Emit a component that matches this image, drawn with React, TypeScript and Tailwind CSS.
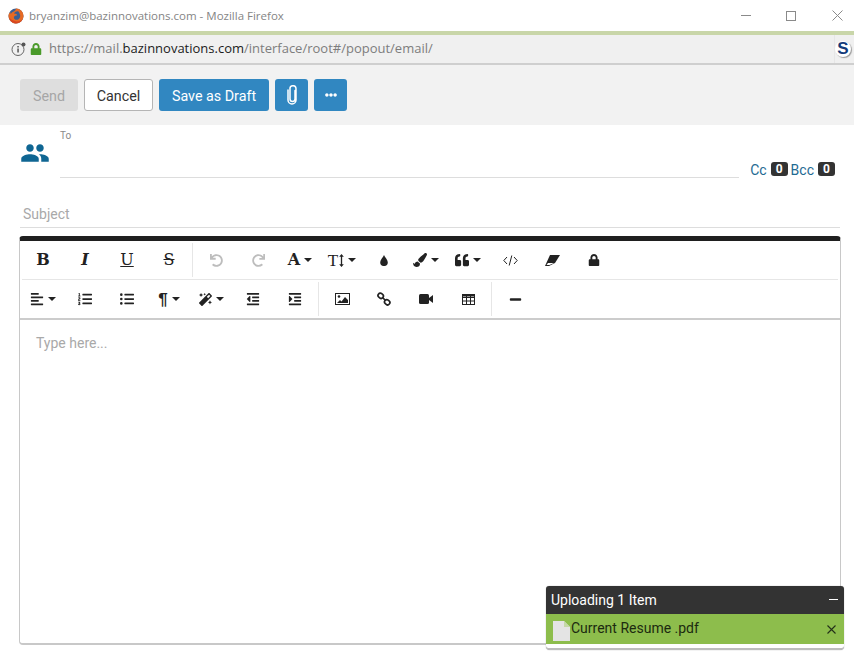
import React from "react";
import { FaPaintBrush, FaQuoteLeft, FaLock, FaAlignLeft, FaListOl, FaListUl, FaMagic, FaOutdent, FaIndent, FaMinus, FaUndo, FaRedo, FaEllipsisH } from "react-icons/fa";
import { MdPeople } from "react-icons/md";

const Caret = () => <span className="ml-[4px] inline-block h-0 w-0 border-x-[4px] border-t-[4px] border-x-transparent border-t-[#222]" />;

const Tool = ({ children, caret, light }: { children: React.ReactNode; caret?: boolean; light?: boolean }) => (
  <div className={`flex h-full w-[42px] shrink-0 items-center justify-center text-[13px] ${light ? "text-[#bdbdbd]" : "text-[#222]"}`}>
    {children}
    {caret && <Caret />}
  </div>
);

const Serif = ({ children, className = "" }: { children: React.ReactNode; className?: string }) => (
  <span className={`font-['DejaVu_Serif','Liberation_Serif',serif] text-[16px] leading-none ${className}`}>{children}</span>
);

const Sep = () => <div className="mx-[2px] h-[34px] w-px shrink-0 bg-[#e6e6e6]" />;

export default function App() {
  return (
    <div className="relative h-[660px] w-[854px] overflow-hidden bg-white font-['Roboto',sans-serif]">
      {/* window title */}
      <div className="flex h-[31px] items-center bg-white pl-[8px]">
        <svg width="16" height="16" viewBox="0 0 16 16" className="mr-[5px]">
          <circle cx="8" cy="8" r="7.5" fill="#3a5f94" />
          <path d="M8 .5a7.500 7.500 0 1 1-7.400 6.300C1 5.300 1.800 4.400 2.600 4c-.2.800-.1 1.500.3 2 .5-1.500 2-2.200 3.200-2.800C7.300 2.600 7.800 1.500 8 .5zM10.500 3.500c-1.800-.6-4.300.6-4.300 2.300 1.300-.2 2.500.3 3.100 1.400-1.500.2-3.600.5-3.400 2.500.2 1.600 2 2.500 3.600 2 2-.6 3.200-2.900 2.500-5C11.700 5.600 11.200 4.400 10.500 3.500z" fill="#e66a24" />
          <path d="M1 9c.6 3.500 3.500 6.300 7 6.300 3 0 5.600-1.800 6.800-4.300-1.500 2-4.500 3-7.300 2.300C4.500 12.500 2.500 11.200 1 9z" fill="#d9451f" />
        </svg>
        <span className="font-['Open_Sans',sans-serif] text-[11.500px] text-[#858585]">bryanzim@bazinnovations.com - Mozilla Firefox</span>
        <div className="ml-auto flex items-center">
          <div className="mr-[35px] h-px w-[10px] bg-[#8a8a8a]" />
          <div className="mr-[36px] h-[10px] w-[10px] border border-[#8a8a8a]" />
          <svg width="11" height="11" viewBox="0 0 11 11" className="mr-[11px]"><path d="M.5.5l10 10M10.500.5l-10 10" stroke="#8a8a8a" fill="none" /></svg>
        </div>
      </div>
      <div className="h-[4px] bg-[#c9d6a9]" />

      {/* url bar */}
      <div className="flex h-[30px] items-center border-b-2 border-[#cfcfcf] bg-[#f0f0f0] pl-[11px] font-['Open_Sans',sans-serif] text-[13px]">
        <svg width="16" height="16" viewBox="0 0 16 16" className="mr-[3px]">
          <circle cx="7" cy="8.500" r="6" fill="none" stroke="#666" strokeWidth="1" />
          <rect x="6.300" y="7.500" width="1.500" height="4" fill="#555" />
          <rect x="6.300" y="5" width="1.500" height="1.500" fill="#555" />
          <circle cx="12.500" cy="3.500" r="2" fill="#555" />
        </svg>
        <FaLock className="mr-[7px] text-[12px] text-[#4a9a2a]" />
        <span className="text-[#7d7d7d]">https://mail.</span>
        <span className="text-[#1c1c1c]">bazinnovations.com</span>
        <span className="text-[#7d7d7d]">/interface/root#/popout/email/</span>
        <div className="ml-auto flex h-full w-[20px] items-center justify-start border-l border-[#e6e6e6]">
          <span className="flex h-[16px] w-[16px] items-center justify-center rounded-full bg-white font-['Liberation_Sans',sans-serif] text-[17px] font-bold text-[#123a7a] shadow-[1px_1px_1px_#999]">S</span>
        </div>
      </div>

      {/* action bar */}
      <div className="flex h-[60px] items-center gap-[6px] bg-[#f2f2f2] pl-[20px] text-[14.300px] leading-[30px]">
        <div className="flex h-[32px] w-[58px] items-center justify-center rounded-[3px] bg-[#dedede] pt-[2px] text-[#a6a6a6]">Send</div>
        <div className="flex h-[32px] w-[69px] items-center justify-center rounded-[3px] border border-[#b5b5b5] bg-white pt-[1px] text-[#333]">Cancel</div>
        <div className="flex h-[32px] w-[110px] items-center justify-center rounded-[3px] bg-[#3187c1] pt-[2px] text-white">Save as Draft</div>
        <div className="flex h-[32px] w-[33px] items-center justify-center rounded-[3px] bg-[#3187c1] text-white">
          <svg width="12" height="20" viewBox="0 0 12 20" fill="none" stroke="currentColor" strokeWidth="1.500" strokeLinecap="round">
            <path d="M8.500 5.500V14a2.500 2.500 0 0 1-5 0V4a3 3 0 0 1 6-.500V15a4 4 0 0 1-8 0V5" transform="translate(.5 0)" />
          </svg>
        </div>
        <div className="flex h-[32px] w-[33px] items-center justify-center rounded-[3px] bg-[#3187c1] text-white"><FaEllipsisH className="text-[12px]" /></div>
      </div>

      {/* to */}
      <div className="flex h-[53px] pl-[20px] pr-[19px]">
        <MdPeople className="mt-[13px] w-[30px] shrink-0 text-[30px] text-[#0f6693]" />
        <div className="ml-[10px] h-full w-[680px] border-b border-[#dddddd] pt-[5px] text-[10px] leading-[12px] text-[#8a8a8a]">To</div>
        <div className="ml-[11px] mt-[37px] flex items-start text-[14px] leading-[15px] text-[#1f6a92]">
          <span className="pt-[1px]">Cc</span>
          <span className="ml-[4px] mr-[3px] flex h-[14px] w-[17px] items-center justify-center rounded-[3px] bg-[#333] text-[12px] font-bold text-white">0</span>
          <span className="pt-[1px]">Bcc</span>
          <span className="ml-[4px] flex h-[14px] w-[17px] items-center justify-center rounded-[3px] bg-[#333] text-[12px] font-bold text-white">0</span>
        </div>
      </div>

      {/* subject */}
      <div className="mx-[20px] mt-[27px] h-[23px] w-[820px] border-b border-[#dddddd] pl-[3px] pt-[1px] text-[14px] leading-[17px] text-[#a9a9a9]">Subject</div>

      {/* editor */}
      <div className="mx-[19px] mt-[8px] flex h-[409px] w-[822px] flex-col rounded-[4px] border-x border-b-2 border-t-[5px] border-x-[#c8c8c8] border-b-[#c8c8c8] border-t-[#1f1f1f]">
        <div className="mx-[2px] flex h-[39px] shrink-0 items-center border-b border-[#e6e6e6]">
          <Tool><Serif className="font-bold">B</Serif></Tool>
          <Tool><Serif className="font-bold italic">I</Serif></Tool>
          <Tool><Serif className="underline">U</Serif></Tool>
          <Tool><Serif className="line-through">S</Serif></Tool>
          <Sep />
          <Tool light><FaUndo /></Tool>
          <Tool light><FaRedo /></Tool>
          <Tool caret><Serif className="font-bold">A</Serif></Tool>
          <Tool caret><span className="font-['Liberation_Serif',serif] text-[17px] leading-none">T</span>
            <svg width="5" height="13" viewBox="0 0 5 14" className="ml-[1px]"><path d="M2.500 0L5 3H3.200v8H5l-2.500 3L0 11h1.800V3H0z" fill="#222" /></svg>
          </Tool>
          <Tool>
            <svg width="8" height="11" viewBox="0 0 9 13"><path d="M4.500 0C5.500 3 9 5.500 9 8.600A4.500 4.500 0 0 1 0 8.600C0 5.500 3.500 3 4.500 0z" fill="#222" /></svg>
          </Tool>
          <Tool caret><FaPaintBrush className="text-[14px]" /></Tool>
          <Tool caret><FaQuoteLeft className="text-[14px]" /></Tool>
          <Tool>
            <svg width="15" height="11" viewBox="0 0 15 11" fill="none" stroke="#222" strokeWidth="1"><path d="M4 2L.8 5.500 4 9M11 2l3.200 3.500L11 9M8.800.5L6.200 10.500" /></svg>
          </Tool>
          <Tool>
            <svg width="15" height="11" viewBox="0 0 15 11"><path d="M5 0h10L10 8 4 11H0z" fill="#222" /><path d="M1.500 10h3L9 8H3z" fill="#fff" /></svg>
          </Tool>
          <Tool><FaLock className="text-[12px]" /></Tool>
        </div>
        <div className="mx-[2px] flex h-[38px] shrink-0 items-center">
          <Tool caret><FaAlignLeft className="text-[14px]" /></Tool>
          <Tool><FaListOl className="text-[14px]" /></Tool>
          <Tool><FaListUl className="text-[14px]" /></Tool>
          <Tool caret><span className="font-['Liberation_Sans',sans-serif] text-[17px] font-bold leading-none">¶</span></Tool>
          <Tool caret><FaMagic /></Tool>
          <Tool><FaOutdent className="text-[14px]" /></Tool>
          <Tool><FaIndent className="text-[14px]" /></Tool>
          <Sep />
          <Tool>
            <svg width="15" height="12" viewBox="0 0 15 12"><rect x=".5" y=".5" width="14" height="11" fill="none" stroke="#222" /><circle cx="4" cy="3.500" r="1.300" fill="#222" /><path d="M2 10l3-3 1.500 1.500L10 4l3 3v3z" fill="#222" /></svg>
          </Tool>
          <Tool>
            <svg width="14" height="14" viewBox="0 0 14 14" fill="none" stroke="#222" strokeWidth="1.700"><rect x="1" y="1.500" width="5.500" height="4.500" rx="2.200" transform="rotate(40 3.700 3.700)" /><rect x="7.500" y="8" width="5.500" height="4.500" rx="2.200" transform="rotate(40 10.200 10.200)" /><path d="M5.500 5.500l3 3" /></svg>
          </Tool>
          <Tool>
            <svg width="14" height="10" viewBox="0 0 14 10"><rect width="10" height="10" rx="1.500" fill="#222" /><path d="M10 4l4-3v8l-4-3z" fill="#222" /></svg>
          </Tool>
          <Tool>
            <svg width="13" height="11" viewBox="0 0 13 11" fill="none" stroke="#222" strokeWidth="1"><rect x=".5" y=".5" width="12" height="10" /><path d="M.5 3.500h12M.5 7h12M4.500 .5v10M8.500 .5v10" /><path d="M0 1.500h13" strokeWidth="2" /></svg>
          </Tool>
          <Sep />
          <Tool><FaMinus /></Tool>
        </div>
        <div className="flex-1 border-t-2 border-[#cccccc] pl-[16px] pt-[15px] text-[14px] leading-[17px] text-[#a9a9a9]">Type here...</div>
      </div>

      {/* upload popup */}
      <div className="absolute left-[546px] top-[586px] h-[64px] w-[298px] rounded-[4px] border-b-2 border-[#bdbdbd] bg-white shadow-[0_0_1px_#888]">
        <div className="flex h-[28px] items-center justify-between rounded-t-[3px] bg-[#333] pl-[5px] pr-[6px] text-[14px] text-white">
          <span>Uploading 1 Item</span>
          <span className="mb-[1px] h-px w-[9px] bg-white" />
        </div>
        <div className="flex h-[30px] items-center bg-[#8dbd4c] pl-[7px] pr-[8px] text-[14px] text-[#1c2a10]">
          <svg width="17" height="20" viewBox="0 0 17 20" className="mt-[4px] shrink-0">
            <path d="M0 0h11l6 6v14H0z" fill="#e4e4e4" />
            <path d="M11 0l6 6h-6z" fill="#c5d8a8" />
          </svg>
          <span className="-mt-[2px] ml-px">Current Resume .pdf</span>
          <svg width="9" height="9" viewBox="0 0 9 9" className="ml-auto"><path d="M.5.500l8 8M8.500.500l-8 8" stroke="#23301a" strokeWidth="1.100" fill="none" /></svg>
        </div>
      </div>
    </div>
  );
}
